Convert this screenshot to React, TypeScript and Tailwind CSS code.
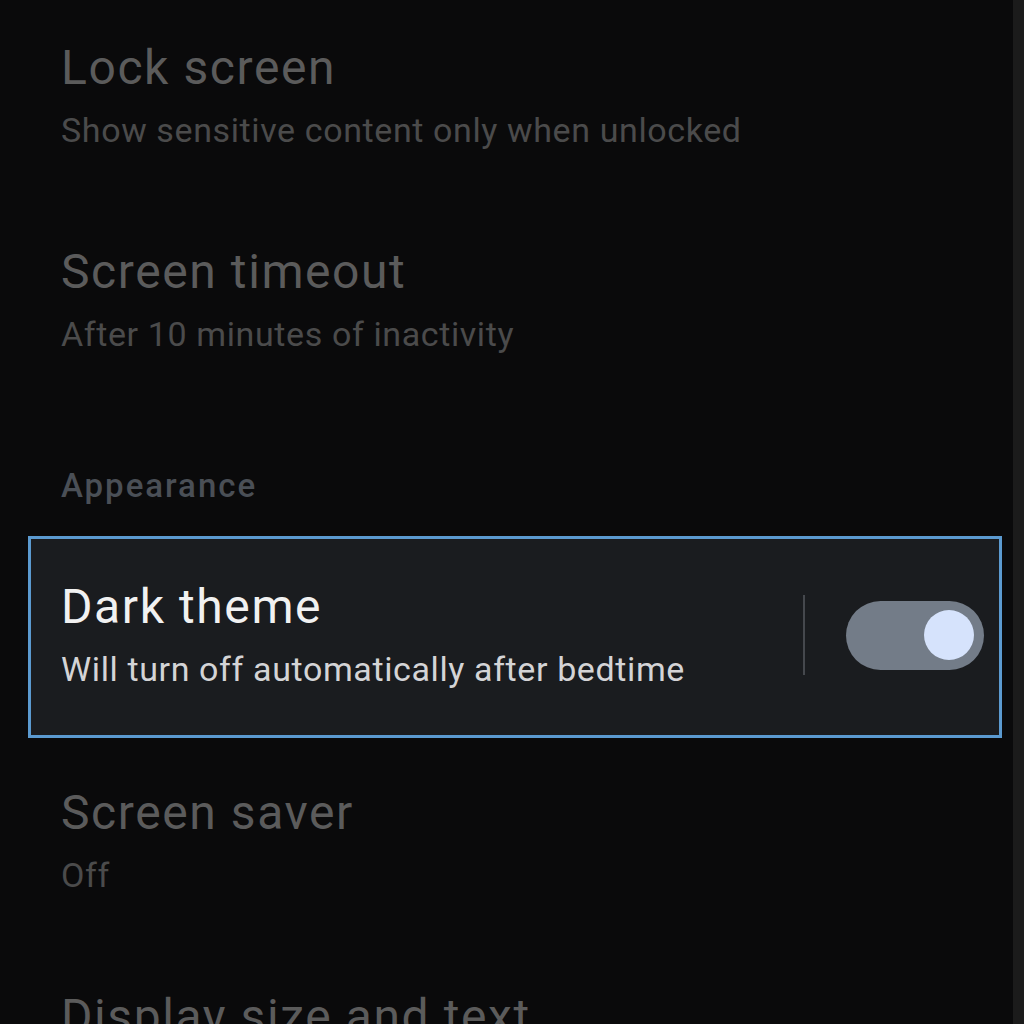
import React from 'react';

const font = { fontFamily: 'Roboto, "Noto Sans", sans-serif' };

function Item({ title, sub, className = '' }: { title: string; sub?: string; className?: string }) {
  return (
    <div className={`px-[33px] ${className}`}>
      <p className="text-[48px] leading-[56px] tracking-[0.033em] text-[#5b5b5b]">{title}</p>
      {sub && <p className="mt-[12px] text-[34px] leading-[44px] tracking-[0.018em] text-[#4b4b4b]">{sub}</p>}
    </div>
  );
}

export default function App() {
  return (
    <div className="flex h-[1024px] w-full overflow-hidden bg-[#0a0a0b]" style={font}>
      <main className="flex-1 pl-[28px] pr-[11px] pt-[40px]">
        <Item title="Lock screen" sub="Show sensitive content only when unlocked" />
        <Item title="Screen timeout" sub="After 10 minutes of inactivity" className="mt-[92px]" />

        <p className="mt-[110px] px-[33px] text-[33px] leading-[40px] tracking-[0.06em] font-medium text-[#4a4f56]">Appearance</p>

        <div className="mt-[30px] flex items-center border-[3px] border-[#5b9ad0] bg-[#1a1c1f] pl-[30px] pr-[15px] pt-[40px] pb-[44px]">
          <div className="flex-1">
            <p className="text-[48px] leading-[56px] tracking-[0.033em] text-[#f1f1f1]">Dark theme</p>
            <p className="mt-[12px] text-[34px] leading-[44px] tracking-[0.018em] text-[#d4d4d6]">Will turn off automatically after bedtime</p>
          </div>
          <div className="h-[80px] w-[2px] bg-[#45484d]" />
          <div className="ml-[41px] flex h-[69px] w-[138px] items-center justify-end rounded-full bg-[#737c88] pr-[10px]">
            <div className="h-[50px] w-[50px] rounded-full bg-[#d6e3fc]" />
          </div>
        </div>

        <Item title="Screen saver" sub="Off" className="mt-[47px]" />
        <Item title="Display size and text" className="mt-[92px]" />
      </main>
      <aside className="w-[11px] shrink-0 bg-[#1b1b1b]" />
    </div>
  );
}
